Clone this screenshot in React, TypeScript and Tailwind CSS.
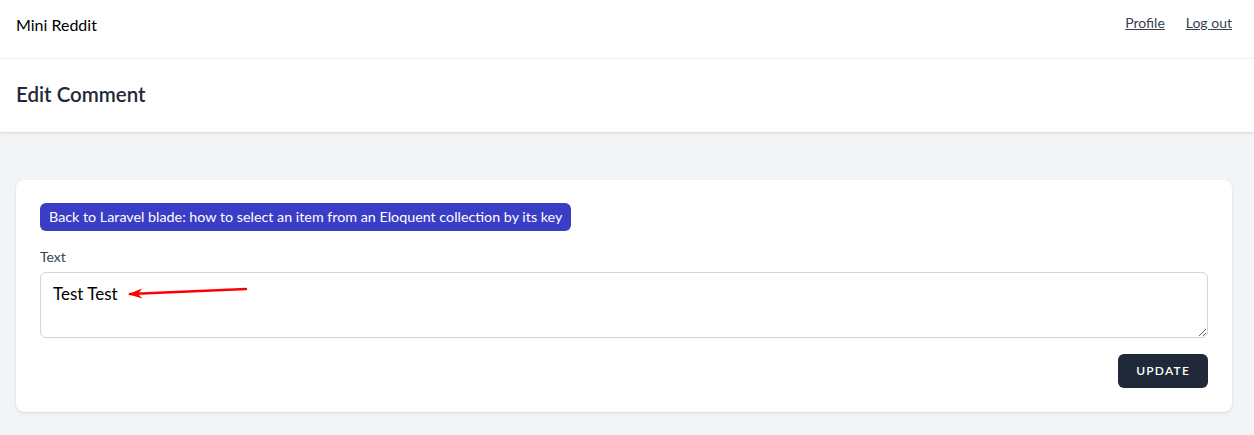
import React from "react";

export default function App() {
  return (
    <div className="min-h-[435px] bg-[#f3f4f6] text-[#111827]" style={{ fontFamily: "Lato, 'Noto Sans', sans-serif" }}>
      <nav className="h-[59px] bg-white border-b border-[#f3f4f6] flex items-start justify-between pl-4 pr-[22px] pt-[14px]">
        <div className="text-[16px] leading-[22px] text-black">Mini Reddit</div>
        <div className="flex gap-[21px] text-[14px] leading-[18px] text-[#374151] pt-0">
          <a className="underline">Profile</a>
          <a className="underline">Log out</a>
        </div>
      </nav>
      <header className="h-[73px] bg-white shadow flex items-center px-4 pb-[3px]">
        <h2 className="text-[20.5px] font-semibold text-[#1f2937]">Edit Comment</h2>
      </header>
      <main className="pl-4 pr-[22px] pt-12">
        <div className="bg-white rounded-lg shadow-sm p-6">
          <a className="inline-block bg-[#3a3dc5] text-white text-[14.3px] rounded-md px-[9px] h-[28px] leading-[28px] -mt-[1px]">
            Back to Laravel blade: how to select an item from an Eloquent collection by its key
          </a>
          <div className="mt-[15px] text-[14px] text-[#374151]">Text</div>
          <div className="relative mt-[5px]">
            <textarea
              className="block w-full h-[66px] border border-[#d1d5db] rounded-md px-3 py-2 text-[17px] text-black resize-y"
              defaultValue="Test Test"
              style={{ fontFamily: "Lato, 'Noto Sans', sans-serif" }}
            />
            <svg className="absolute left-[86px] top-[12px]" width="124" height="16" viewBox="0 0 124 16">
              <path d="M4 10 L120 5" stroke="#f00" strokeWidth="2.5" strokeLinecap="round" />
              <path d="M2 10.2 L16 4.5 L12 10 L16.5 14.5 Z" fill="#f00" />
            </svg>
          </div>
          <div className="flex justify-end mt-4">
            <button className="bg-[#1f2937] text-white text-[12px] font-semibold tracking-widest uppercase rounded-md px-[18px] h-[34px]">
              Update
            </button>
          </div>
        </div>
      </main>
    </div>
  );
}
